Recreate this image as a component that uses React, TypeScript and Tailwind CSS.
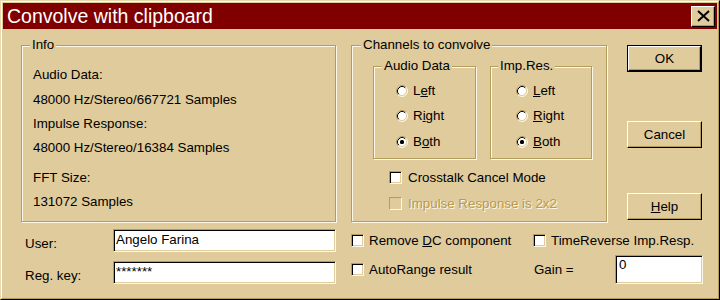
import React from 'react';

function Etched({
  label,
  labelLeft,
  className,
  children,
}: {
  label: string;
  labelLeft: string;
  className: string;
  children?: React.ReactNode;
}) {
  return (
    <div
      className={`relative border border-[#b49c5c] shadow-[inset_1px_1px_0_#fff8e8,1px_1px_0_#fff8e8] ${className}`}
    >
      <span className={`absolute top-[-9px] ${labelLeft} bg-[#dfcb9c] px-[2px] leading-[15px]`}>{label}</span>
      {children}
    </div>
  );
}

function Radio({ checked }: { checked?: boolean }) {
  return (
    <svg width="12" height="12" viewBox="0 0 12 12" className="shrink-0">
      <circle cx="6" cy="6" r="5" fill="#ffffff" />
      <path d="M2.11 9.89 A5.5 5.5 0 0 1 9.89 2.11" fill="none" stroke="#b49c5c" strokeWidth="1" />
      <path d="M9.89 2.11 A5.5 5.5 0 0 1 2.11 9.89" fill="none" stroke="#fff8e8" strokeWidth="1" />
      <path d="M2.82 9.18 A4.5 4.5 0 0 1 9.18 2.82" fill="none" stroke="#000000" strokeWidth="1" />
      <path d="M9.18 2.82 A4.5 4.5 0 0 1 2.82 9.18" fill="none" stroke="#dfcb9c" strokeWidth="1" />
      {checked && <rect x="4" y="4" width="4" height="4" rx="1.5" fill="#000000" />}
    </svg>
  );
}

function Check({ disabled }: { disabled?: boolean }) {
  return disabled ? (
    <span className="h-[13px] w-[13px] shrink-0 border border-b-[#fff8e8] border-l-[#b49c5c] border-r-[#fff8e8] border-t-[#b49c5c] bg-[#dfcb9c]" />
  ) : (
    <span className="h-[13px] w-[13px] shrink-0 border border-b-[#fff8e8] border-l-[#b49c5c] border-r-[#fff8e8] border-t-[#b49c5c] bg-white shadow-[inset_1px_1px_0_#000,inset_-1px_-1px_0_#dfcb9c]" />
  );
}

function Btn({ children, isDefault }: { children: React.ReactNode; isDefault?: boolean }) {
  if (isDefault) {
    return (
      <div className="h-[27px] w-[75px] border border-black">
        <div className="flex h-full w-full items-center justify-center border border-b-black border-l-white border-r-black border-t-white shadow-[inset_-1px_-1px_0_#b49c5c]">
          {children}
        </div>
      </div>
    );
  }
  return (
    <div className="flex h-[27px] w-[75px] items-center justify-center border border-b-black border-l-white border-r-black border-t-white shadow-[inset_-1px_-1px_0_#b49c5c]">
      {children}
    </div>
  );
}

function Field({ className, children }: { className: string; children?: React.ReactNode }) {
  return (
    <div
      className={`border border-b-[#fff8e8] border-l-[#b49c5c] border-r-[#fff8e8] border-t-[#b49c5c] bg-white leading-[15px] shadow-[inset_1px_1px_0_#000,inset_-1px_-1px_0_#dfcb9c] ${className}`}
    >
      {children}
    </div>
  );
}

function RadioRow({ checked, className, children }: { checked?: boolean; className: string; children: React.ReactNode }) {
  return (
    <div className={`flex h-[15px] items-center gap-[5px] ${className}`}>
      <Radio checked={checked} />
      <span>{children}</span>
    </div>
  );
}

export default function App() {
  return (
    <div className="h-[300px] w-[720px] border border-b-black border-l-[#e8d8b0] border-r-black border-t-[#e8d8b0] bg-[#dfcb9c] font-['Liberation_Sans',Arial,sans-serif] text-[13.33px] leading-[15px] text-black">
      <div className="h-full w-full border border-b-[#b49c5c] border-l-white border-r-[#b49c5c] border-t-white p-px">
        {/* Title bar */}
        <div className="flex h-[26px] items-center justify-between bg-[#800000]">
          <span className="pl-[4px] text-[19.5px] leading-[22px] text-white">Convolve with clipboard</span>
          <div className="mr-[2px] flex h-[21px] w-[24px] items-center justify-center border border-b-black border-l-white border-r-black border-t-white bg-[#dfcb9c] shadow-[inset_-1px_-1px_0_#b49c5c]">
            <svg width="13" height="12" viewBox="0 0 13 12">
              <path d="M1 1 L12 11 M12 1 L1 11" stroke="#000" strokeWidth="2" />
            </svg>
          </div>
        </div>

        {/* Top section */}
        <div className="flex pl-[18px] pt-[16px]">
          <Etched label="Info" labelLeft="left-[8px]" className="h-[177px] w-[315px] pl-[11px]">
            <div className="mt-[21px]">Audio Data:</div>
            <div className="mt-[10px]">48000 Hz/Stereo/667721 Samples</div>
            <div className="mt-[9px]">Impulse Response:</div>
            <div className="mt-[9px]">48000 Hz/Stereo/16384 Samples</div>
            <div className="mt-[15px]">FFT Size:</div>
            <div className="mt-[9px]">131072 Samples</div>
          </Etched>

          <Etched label="Channels to convolve" labelLeft="left-[9px]" className="ml-[15px] flex h-[177px] w-[256px] flex-col">
            <div className="ml-[21px] mt-[20px] flex">
              <Etched label="Audio Data" labelLeft="left-[8px]" className="flex h-[93px] w-[103px] flex-col pl-[22px]">
                <RadioRow className="mt-[16px]">
                  L<span className="underline">e</span>ft
                </RadioRow>
                <RadioRow className="mt-[10px]">
                  R<span className="underline">i</span>ght
                </RadioRow>
                <RadioRow checked className="mt-[11px]">
                  B<span className="underline">o</span>th
                </RadioRow>
              </Etched>
              <Etched label="Imp.Res." labelLeft="left-[7px]" className="ml-[14px] flex h-[93px] w-[102px] flex-col pl-[25px]">
                <RadioRow className="mt-[16px]">
                  <span className="underline">L</span>eft
                </RadioRow>
                <RadioRow className="mt-[10px]">
                  <span className="underline">R</span>ight
                </RadioRow>
                <RadioRow checked className="mt-[11px]">
                  <span className="underline">B</span>oth
                </RadioRow>
              </Etched>
            </div>
            <div className="ml-[37px] mt-[11px] flex h-[15px] items-center gap-[6px]">
              <Check />
              <span>Crosstalk Cancel Mode</span>
            </div>
            <div className="ml-[37px] mt-[11px] flex h-[15px] items-center gap-[6px]">
              <Check disabled />
              <span className="text-[#b89a50] [text-shadow:1px_1px_0_#fff8e8]">Impulse Response is 2x2</span>
            </div>
          </Etched>

          <div className="ml-[20px] flex w-[75px] flex-col">
            <Btn isDefault>OK</Btn>
            <div className="mt-[49px]">
              <Btn>Cancel</Btn>
            </div>
            <div className="mt-[45px]">
              <Btn>
                <span>
                  <span className="underline">H</span>elp
                </span>
              </Btn>
            </div>
          </div>
        </div>

        {/* Bottom section */}
        <div className="flex pl-[18px]">
          <div className="w-[315px]">
            <div className="mt-[7px] flex h-[23px]">
              <span className="mt-[7px] w-[92px] pl-[4px]">User:</span>
              <Field className="h-[23px] w-[223px] pl-[2px] pt-[2px]">Angelo Farina</Field>
            </div>
            <div className="mt-[9px] flex h-[23px]">
              <span className="mt-[7px] w-[92px] pl-[4px]">Reg. key:</span>
              <Field className="h-[23px] w-[223px] pl-[2px] pt-[2px]">*******</Field>
            </div>
          </div>

          <div className="ml-[15px] w-[352px]">
            <div className="mt-[7px] flex h-[23px] items-center">
              <div className="flex w-[182px] items-center gap-[5px]">
                <Check />
                <span>
                  Remove <span className="underline">D</span>C component
                </span>
              </div>
              <div className="flex items-center gap-[5px]">
                <Check />
                <span>TimeReverse Imp.Resp.</span>
              </div>
            </div>
            <div className="mt-[3px] flex h-[29px] items-center">
              <div className="flex w-[182px] items-center gap-[5px]">
                <Check />
                <span>AutoRange result</span>
              </div>
              <span className="w-[82px] pl-[1px]">Gain =</span>
              <Field className="h-[29px] w-[88px] self-start pl-[3px] pt-[1px]">0</Field>
            </div>
          </div>
        </div>
      </div>
    </div>
  );
}
